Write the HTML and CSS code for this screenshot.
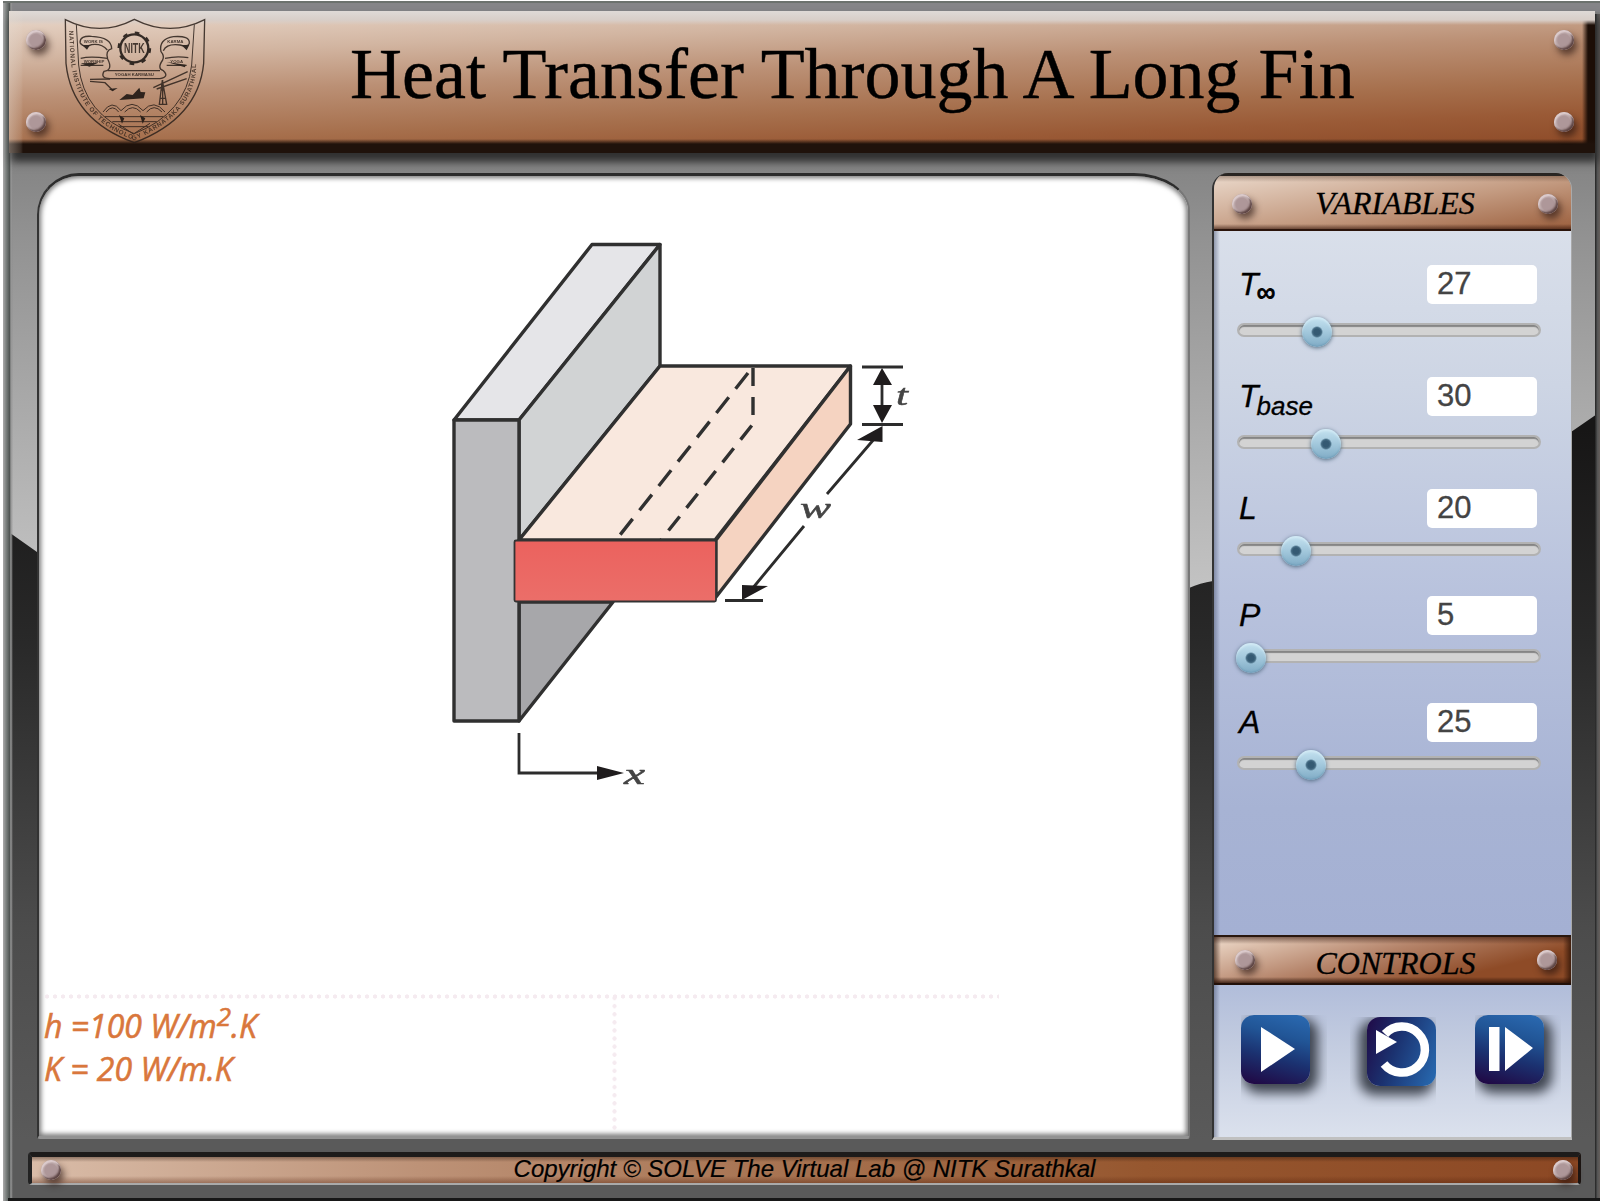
FILE: index.html
```html
<!DOCTYPE html>
<html lang="en">
<head>
<meta charset="utf-8">
<title>Heat Transfer Through A Long Fin</title>
<link rel="stylesheet" href="styles.css">
</head>
<body>
<div class="frame">
  <svg class="backdrop" viewBox="3 1 1597 1200" aria-hidden="true">
    <defs>
      <linearGradient id="steel" gradientUnits="userSpaceOnUse" x1="0" y1="150" x2="0" y2="590"><stop offset="0" stop-color="#828282"/><stop offset=".2" stop-color="#929292"/><stop offset="1" stop-color="#c3c3c3"/></linearGradient>
      <linearGradient id="coal" gradientUnits="userSpaceOnUse" x1="0" y1="430" x2="0" y2="1140"><stop offset="0" stop-color="#171616"/><stop offset=".3" stop-color="#292929"/><stop offset=".7" stop-color="#4c4c4c"/><stop offset="1" stop-color="#5a5a5a"/></linearGradient>
      <linearGradient id="bevel"><stop offset="0" stop-color="#aaa"/><stop offset=".35" stop-color="#777c7a"/><stop offset=".65" stop-color="#515654"/><stop offset=".8" stop-color="#999"/><stop offset="1" stop-color="#888" stop-opacity="0"/></linearGradient>
      <linearGradient id="bevelR"><stop offset="0" stop-color="#222"/><stop offset=".5" stop-color="#555"/><stop offset="1" stop-color="#655f5c"/></linearGradient>
    </defs>
    <rect x="3" y="1" width="1597" height="1200" fill="url(#steel)"/>
    <rect x="3" y="1" width="1597" height="11" fill="#858588"/>
    <rect x="3" y="1" width="1597" height="2" fill="#6c726e"/>
    <path d="M3 528 L37 552 V1000 H1189 V588 Q1200 583 1213 581 V1000 H1571 V432 L1600 412 V1201 H3Z" fill="url(#coal)"/>
    <rect x="3" y="3" width="10" height="1198" fill="url(#bevel)"/>
    <rect x="1595" y="14" width="5" height="1187" fill="url(#bevelR)"/>
    <rect x="8" y="1198" width="1592" height="3" fill="#171717"/>
  </svg>

  <header class="banner">
    <svg class="crest" viewBox="0 3 510 417" aria-label="NITK crest">
      <defs><path id="band" d="M57 62 L62 150 Q80 330 253 390 Q420 320 438 190 L441 50"/></defs>
      <g fill="none" stroke="#2c211b" stroke-width="4">
        <path d="M46 29 Q150 82 253 28 Q360 82 464 29 L461 160 Q445 325 253 398 Q65 330 48 160Z"/>
        <path d="M79 43 L86 165 Q100 315 253 371 Q408 310 425 165 L433 43" stroke-width="3"/>
        <path d="M90 98 Q90 76 125 79 Q185 82 185 116 Q165 122 173 147 Q190 180 162 184 Q150 205 180 206 H330 Q359 200 340 182 Q320 176 338 150 Q344 138 333 125 Q325 88 370 80 Q420 76 418 100 Q415 112 390 105 Q350 100 340 122"/>
        <path d="M90 98 Q100 115 125 104 Q155 100 172 120 M92 145 Q120 138 172 145 M92 166 H160 M415 143 Q380 137 345 145 M350 166 H410 M172 182 H330"/>
        <path d="M120 214 L165 218 L185 238 M120 208 L180 207 M310 233 L413 185 M320 237 L410 206 M328 283 L337 210 L350 283Z M338 210 V285 M332 265 H347 M334 240 H344"/>
        <path d="M159 306 Q186 266 213 302 Q246 264 279 302 Q312 265 345 306 M168 306 Q188 281 206 306 M224 306 Q248 280 272 306 M290 306 Q312 280 336 306 M165 320 H340 M187 335 H320 M208 350 H295 M205 342 L250 372 L300 340" stroke-width="3"/>
      </g>
      <path d="M208 270 L230 252 L248 255 L268 233 L272 246 L286 247 L281 265Z M176 237 L203 234 L188 244Z M92 160 L145 158 L118 170Z M350 156 L407 164 L405 172Z M207 315 L223 325 L216 341Z M270 315 L286 325 L278 341Z M96 105 H120 L111 119Z M394 105 H418 L410 121Z" fill="#17110e"/>
      <circle cx="253" cy="115" r="42" fill="none" stroke="#17110e" stroke-width="7"/>
      <circle cx="253" cy="115" r="47" fill="none" stroke="#17110e" stroke-width="7" stroke-dasharray="14 22.900"/>
      <g fill="#2c211b" text-anchor="middle">
        <text x="253" y="130" class="crest-mark" textLength="62" lengthAdjust="spacingAndGlyphs">NITK</text>
        <text x="130" y="98" class="crest-small">WORK IS</text>
        <text x="132" y="159" class="crest-small">WORSHIP</text>
        <text x="376" y="98" class="crest-small">KARMA</text>
        <text x="380" y="159" class="crest-small">YOGA</text>
        <text x="253" y="199" class="crest-small">YOGAH KARMASU</text>
      </g>
      <text class="crest-band"><textPath href="#band" textLength="728">NATIONAL INSTITUTE OF TECHNOLOGY KARNATAKA SURATHKAL</textPath></text>
    </svg>
    <h1>Heat Transfer Through A Long Fin</h1>
    <i class="rivet r1"></i><i class="rivet r2"></i><i class="rivet r3"></i><i class="rivet r4"></i>
  </header>

  <div class="workspace">
    <main class="stage">
      <svg class="fin" viewBox="430 230 500 570" role="img" aria-label="Rectangular fin attached to a wall">
        <defs><linearGradient id="hot" x2="0" y2="1"><stop offset="0" stop-color="#eb625e"/><stop offset="1" stop-color="#eb6e69"/></linearGradient></defs>
        <g class="soft" stroke="#303030" stroke-width="3.4" stroke-linejoin="round">
          <path d="M454 420 L592 244.500 H660 L519 420Z" fill="#e5e5e8"/>
          <path d="M660 244.500 V366 L519 540 V420Z" fill="#d1d3d4"/>
          <path d="M519 602 H613 L519 721Z" fill="#a7a7aa"/>
          <path d="M454 420 H519 V721 H454Z" fill="#bbbbbe"/>
          <path d="M660 366 H850.500 L715 540 H519Z" fill="#f9e8de"/>
          <path d="M850.500 366 V424 L716 597 V540Z" fill="#f5d3c1"/>
          <path d="M748 373 L616 540" fill="none" stroke-dasharray="20 11"/>
          <path d="M753 368 V424 L661 540" fill="none" stroke-dasharray="18 11"/>
        </g>
        <rect x="514.500" y="540.500" width="201.500" height="61" rx="1.500" fill="url(#hot)" stroke="#333" stroke-width="1.800"/>
        <g class="soft" fill="none" stroke="#2c2c2c" stroke-width="2.800">
          <path d="M862 367 H903 M862 424.500 H903 M882 375 V416 M725 600.500 H763 M875 438 L827 494 M804 526 L752 589 M519 733 V773 H600"/>
        </g>
        <path class="soft" d="M882 368 L892 385 H873Z M882 423 L892 405 H873Z M882.500 426 V442 L857 440Z M742 600 V585 L768 586Z M624 773 L597 766 V780Z" fill="#1f1c1d"/>
        <g class="dims"><text x="896" y="405" textLength="12" lengthAdjust="spacingAndGlyphs">t</text><text x="800" y="518" textLength="31" lengthAdjust="spacingAndGlyphs">w</text><text x="624" y="784" textLength="21" lengthAdjust="spacingAndGlyphs">x</text></g>
      </svg>
      <section class="readout">
        <div class="constants">
          <p>h =100 W/m<sup>2</sup>.K</p>
          <p>K = 20 W/m.K</p>
        </div>
      </section>
    </main>

    <aside class="panel">
      <h2 class="plate plate-top"><i class="rivet"></i><span>VARIABLES</span><i class="rivet"></i></h2>
      <div class="variables">
        <div class="field wide"><label>T<sub class="inf">∞</sub></label><output>27</output><div class="track"><b style="left:80px"></b></div></div>
        <div class="field wide"><label>T<sub>base</sub></label><output>30</output><div class="track"><b style="left:89px"></b></div></div>
        <div class="field"><label>L</label><output>20</output><div class="track"><b style="left:59px"></b></div></div>
        <div class="field"><label>P</label><output>5</output><div class="track"><b style="left:14px"></b></div></div>
        <div class="field"><label>A</label><output>25</output><div class="track"><b style="left:74px"></b></div></div>
      </div>
      <h2 class="plate plate-mid"><i class="rivet"></i><span>CONTROLS</span><i class="rivet"></i></h2>
      <div class="controls">
        <div class="key"><div class="cap"><svg viewBox="0 0 69 69"><path d="M20 12 L54 34 L20 57Z" fill="#fff"/></svg></div></div>
        <div class="key key-reset"><div class="cap"><svg viewBox="0 0 69 69"><path d="M18 17 A23 23 0 1 1 17 47" fill="none" stroke="#fff" stroke-width="8.500"/><path d="M9 13 L30 25 L9 37Z" fill="#fff"/></svg></div></div>
        <div class="key"><div class="cap"><svg viewBox="0 0 69 69"><path d="M14 12 H24.500 V56 H14Z M30 12 L58 33 L30 56Z" fill="#fff"/></svg></div></div>
      </div>
    </aside>
  </div>

  <footer class="footer"><i class="rivet"></i><span>Copyright © SOLVE The Virtual Lab @ NITK Surathkal</span><i class="rivet"></i></footer>
</div>
</body>
</html>
```
FILE: styles.css
```css
* { box-sizing: border-box; }
body { margin: 0; background: #fff; width: 1600px; height: 1204px; overflow: hidden; font-family: "Liberation Sans", Arial, sans-serif; }
h1, h2, p { margin: 0; font-weight: 400; }

.frame { position: relative; display: flow-root; margin: 1px 0 0 3px; width: 1597px; height: 1200px; }
.backdrop { position: absolute; inset: 0; width: 1597px; height: 1200px; z-index: -1; }

/* Round metal rivets */
.rivet { display: block; flex: none; width: 20px; height: 20px; border-radius: 50%; background: radial-gradient(circle at 50% 52%, #ae9799 0 42%, #c9b7b8 62%, #a48f90 75%); box-shadow: inset 1px 2px 1px #dccbcc, inset -2px -2px 2px #5d4443, 3px 5px 7px rgba(40, 20, 15, .65); }

/* Title banner */
.banner { position: relative; display: flex; width: 1586px; height: 142px; margin: 10px 0 0 6px; padding-left: 41px;
  background:
    linear-gradient(90deg, rgba(230, 220, 210, .4), rgba(230, 220, 210, .12) 12px, transparent 14px),
    linear-gradient(#dfdad7 0, #d8cec8 9px, rgba(216, 206, 200, 0) 14px),
    linear-gradient(transparent 128px, #1f120b 133px),
    linear-gradient(270deg, #1c0e07 7px, transparent 13px),
    linear-gradient(177.700deg, #e6d3c5 8px, #d2b5a1 48px, #bb9075 88px, #a66f4c 135px, #9a5a36 165px, #8e4c29 195px);
  box-shadow: 3px 8px 8px 1px #303030; }
.crest { width: 170px; height: 139px; flex: none; opacity: .85; }
.crest-band { font: 700 19px "Liberation Sans", sans-serif; fill: #3a2a20; }
.crest-small { font: 700 13px "Liberation Sans", sans-serif; }
.crest-mark { font: 700 42px "Liberation Sans", sans-serif; }
.banner h1 { font: 72px/80px "Liberation Serif", "Times New Roman", serif; color: #000; margin: 23px 0 0 130px; white-space: nowrap; -webkit-text-stroke: .4px #000; }
.banner .rivet { position: absolute; }
.r1 { left: 17px; top: 19px; } .r2 { left: 17px; top: 101px; }
.r3 { right: 21px; top: 19px; } .r4 { right: 21px; top: 101px; }

.workspace { display: flex; gap: 22px; margin-top: 20px; padding-left: 34px; height: 967px; }
.stage { display: flex; flex-direction: column; width: 1153px; height: 966px; background: #fff; border: solid; border-width: 3px 2px 3px 2px; border-color: #2c2c2c #777 #929292 #333; border-radius: 42px 56px 3px 3px / 42px 38px 3px 3px; box-shadow: inset 0 0 5px 2px #777; }
.fin { width: 500px; height: 570px; margin: 54px 0 0 391px; }
.soft { filter: blur(.6px); }
.dims { font: italic 30px "Liberation Serif", serif; fill: #444; stroke: #444; stroke-width: .5px; filter: blur(.5px); }
.readout { flex: 1; margin: 194px 189px 3px 4px;
  background: radial-gradient(circle, #f5ebf0 1.800px, transparent 2.400px) 0 0 / 8px 5px repeat-x, radial-gradient(circle, #f5ebf0 1.800px, transparent 2.400px) 569px 0 / 5px 8.100px repeat-y; }
.constants { padding: 10px 0 0 1px; color: #d9773c; font: italic 32px/43px "Open Sans", sans-serif; -webkit-text-stroke: .6px #d9773c; white-space: nowrap; }
.constants p { height: 43px; }
.constants sup { font-size: 26px; line-height: 0; vertical-align: 12px; }

/* Side panel */
.panel { display: flex; flex-direction: column; width: 360px; height: 967px; border-left: 2px solid #333; border-bottom: 3px solid #c0c0c0; border-right: 1px solid #aaa; border-radius: 16px 16px 0 0; overflow: hidden; }
.plate { display: flex; align-items: center; justify-content: space-between; font: italic 32px/40px "Liberation Serif", serif; color: #000; -webkit-text-stroke: .3px #000; }
.plate-top { height: 58px; padding: 3px 13px 0 18px; border-top: 3px solid #292522; border-bottom: 2px solid #2b140b;
  background: linear-gradient(rgba(60, 35, 20, .35), transparent 6px, transparent 48px, rgba(50, 20, 10, .6) 53px), linear-gradient(171deg, #ead8ca, #c39a80 55%, #9c603e); }
.plate-mid { height: 50px; padding: 0 14px 0 21px; border-top: 2px solid #29170e; border-bottom: 2px solid #221009;
  background: linear-gradient(rgba(50, 20, 10, .55), transparent 7px, transparent 40px, rgba(40, 15, 5, .8) 46px), linear-gradient(270deg, rgba(30, 10, 0, .7), transparent 8px), linear-gradient(90deg, rgba(30, 10, 0, .6), transparent 7px), linear-gradient(166deg, #efdccc, #b5846a 42%, #8e4b27 75%); }
.plate-mid span { padding-top: 5px; margin-left: -1px; }
.plate-top span { margin-top: -3px; }
.variables { height: 704px; padding: 34px 0 0 23px; background: linear-gradient(90deg, rgba(60, 70, 100, .45), transparent 6px), linear-gradient(#d9dfea, #cdd5e4 22%, #b8c2dd 52%, #a7b3d4 82%, #a4b0d3); }
.field { display: grid; grid-template-columns: 190px 110px; grid-template-rows: 39px 14px; row-gap: 14px; align-content: start; height: 107px; }
.field.wide { height: 112px; row-gap: 19px; }
.field label { padding-left: 2px; font: italic 32px/38px "Liberation Sans", sans-serif; color: #000; white-space: nowrap; -webkit-text-stroke: .3px #000; }
.field sub { font-size: 26px; line-height: 0; vertical-align: -8px; margin-left: -2px; }
.field sub.inf { font-size: 26px; vertical-align: -6px; -webkit-text-stroke: 1px #000; }
.field output { height: 39px; background: #fff; border-radius: 5px; padding-left: 10px; font: 31px/38px "Liberation Sans", sans-serif; color: #444; -webkit-text-stroke: .3px #444; }
.track { position: relative; grid-column: 1 / 3; width: 304px; height: 14px; border: 2px solid #b2b2b2; border-radius: 7px; background: #d3d3d3; box-shadow: inset 0 2px 1px #858585; }
.track b { position: absolute; top: 7px; width: 30px; height: 30px; margin: -15px 0 0 -17px; border-radius: 50%; background: radial-gradient(circle, #355a73 0 3px, #476d85 4.500px, transparent 6px), linear-gradient(#c5e2f0, #9fc5da 55%, #7fabc5); box-shadow: inset 0 2px 2px #d2eaf5, inset 0 -1px 2px #6d9bb6, 0 1px 4px #506b80; }
.controls { flex: 1; display: flex; justify-content: space-between; padding: 30px 10px 0 27px; background: linear-gradient(90deg, rgba(60, 70, 100, .45), transparent 6px), linear-gradient(#b1bdda, #c3cce0 40%, #dbe1ed); }
.key { width: 86px; height: 90px; overflow: hidden; }
.key-reset { margin: 2px 16px 0 0; display: flex; justify-content: flex-end; }
.cap { width: 69px; height: 69px; border-radius: 13px; background: linear-gradient(195deg, #2b6bb3, #215596 32%, #1b3271 60%, #200a46 95%); box-shadow: 5px 6px 12px 3px #3e444f; }
.key-reset .cap { background: linear-gradient(110deg, #200946, #1b3270 42%, #286cb3); box-shadow: -5px 6px 12px 3px #3e444f; }
.cap svg { display: block; width: 69px; height: 69px; }

.footer { display: flex; align-items: center; justify-content: space-between; width: 1553px; height: 33px; margin: 12px 0 0 25px; padding: 0 9px 0 13px; border: solid; border-width: 5px 3px 2px 4px; border-color: #1d1b1a #1c1512 #aaa #222; border-radius: 4px;
  background: linear-gradient(rgba(40, 20, 10, .4), transparent 5px, transparent 19px, rgba(80, 30, 10, .4)), linear-gradient(90deg, #d9bca8, #bd9277 25%, #a97655 46%, #96572f 72%, #8c4824); background-clip: padding-box; }
.footer span { font: italic 24px/28px "Liberation Sans", sans-serif; color: #000; margin: -3px 5px 0 0; -webkit-text-stroke: .2px #000; }
.footer .rivet { margin: 0 -4px; }
```
